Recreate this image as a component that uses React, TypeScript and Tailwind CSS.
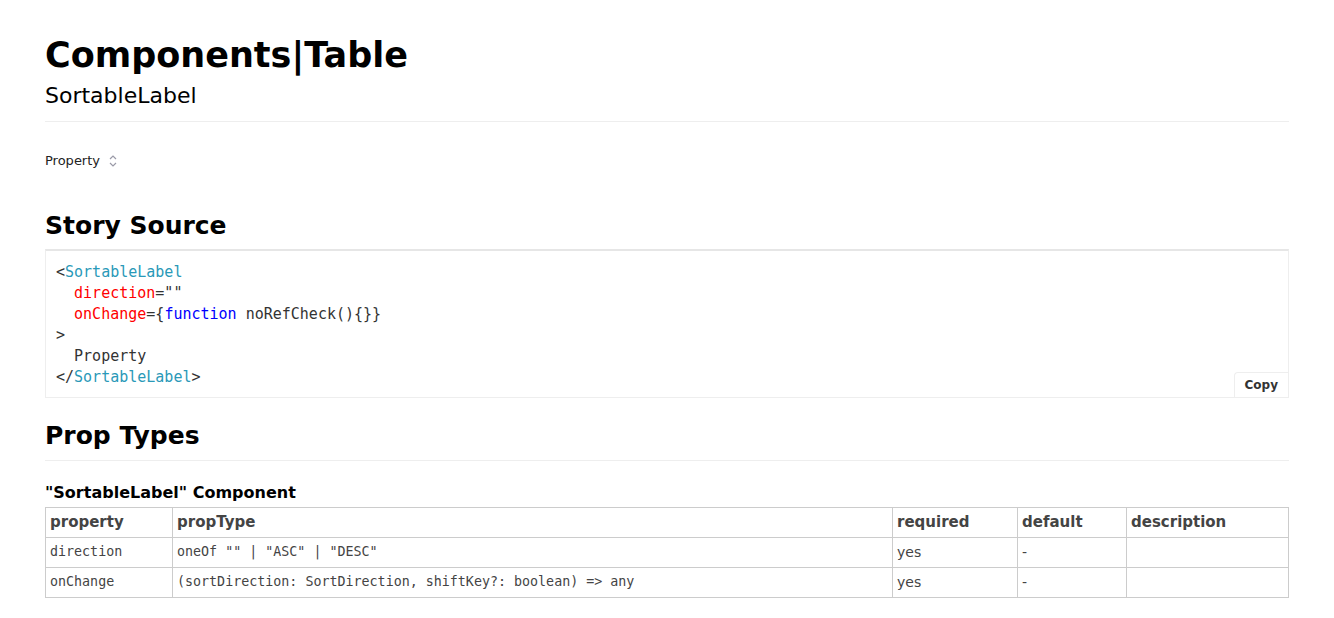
import React from "react";

const sans = "font-['DejaVu_Sans',sans-serif]";
const mono = "font-['DejaVu_Sans_Mono',monospace]";

const rows = [
  { name: "direction", type: 'oneOf "" | "ASC" | "DESC"', required: "yes", def: "-" },
  {
    name: "onChange",
    type: "(sortDirection: SortDirection, shiftKey?: boolean) => any",
    required: "yes",
    def: "-",
  },
];

function Chevrons() {
  return (
    <svg width="10" height="14" viewBox="0 0 10 14" fill="none" stroke="#9a9aa8" strokeWidth="1.2">
      <path d="M2 5 L5 2 L8 5" />
      <path d="M2 9 L5 12 L8 9" />
    </svg>
  );
}

export default function App() {
  return (
    <div className={`${sans} bg-white text-black min-h-screen px-[45px] pt-[33px]`}>
      <h1 className="text-[35px] font-bold leading-[44px]">Components|Table</h1>
      <h2 className="text-[22px] leading-[28px] mt-[5px]">SortableLabel</h2>
      <hr className="border-0 border-t border-[#eee] mt-[11px]" />

      <div className="mt-[29px] flex items-center gap-[8px] text-[13px] text-[#222]">
        <span>Property</span>
        <Chevrons />
      </div>

      <h2 className="text-[25px] font-bold leading-[30px] mt-[40px]">Story Source</h2>
      <div className="relative mt-[8px] border border-[#eee] border-t-2 border-t-[#e6e6e6] px-[10px] pt-[11px] pb-[9px]">
        <div className={`${mono} text-[15px] leading-[21px] text-[#333] whitespace-pre`}>
          <div>
            {"<"}
            <span className="text-[#2a99b8]">SortableLabel</span>
          </div>
          <div>
            {"  "}
            <span className="text-[#ff0000]">direction</span>
            {'=""'}
          </div>
          <div>
            {"  "}
            <span className="text-[#ff0000]">onChange</span>
            {"={"}
            <span className="text-[#0000ff]">function</span>
            {" noRefCheck(){}}"}
          </div>
          <div>{">"}</div>
          <div>{"  Property"}</div>
          <div>
            {"</"}
            <span className="text-[#2a99b8]">SortableLabel</span>
            {">"}
          </div>
        </div>
        <button className="absolute right-0 bottom-0 h-[25px] px-[10px] border-l border-t border-[#eee] rounded-tl-[4px] bg-white text-[12px] font-bold text-[#333]">
          Copy
        </button>
      </div>

      <h2 className="text-[25px] font-bold leading-[30px] mt-[23px]">Prop Types</h2>
      <hr className="border-0 border-t border-[#eee] mt-[9px]" />

      <h3 className="text-[16px] font-bold leading-[20px] mt-[22px]">"SortableLabel" Component</h3>
      <table className="w-full mt-[4px] border-collapse text-[#444]">
        <thead>
          <tr className="h-[30px]">
            <th className="w-[127px] border border-[#ccc] px-[4px] text-left text-[15px] font-bold">property</th>
            <th className="w-[720px] border border-[#ccc] px-[4px] text-left text-[15px] font-bold">propType</th>
            <th className="w-[125px] border border-[#ccc] px-[4px] text-left text-[15px] font-bold">required</th>
            <th className="w-[109px] border border-[#ccc] px-[4px] text-left text-[15px] font-bold">default</th>
            <th className="border border-[#ccc] px-[4px] text-left text-[15px] font-bold">description</th>
          </tr>
        </thead>
        <tbody>
          {rows.map((r) => (
            <tr key={r.name} className="h-[30px]">
              <td className={`${mono} border border-[#ccc] px-[4px] text-[13.33px]`}>{r.name}</td>
              <td className={`${mono} border border-[#ccc] px-[4px] text-[13.33px]`}>{r.type}</td>
              <td className="border border-[#ccc] px-[4px] text-[14px]">{r.required}</td>
              <td className="border border-[#ccc] px-[4px] text-[14px]">{r.def}</td>
              <td className="border border-[#ccc] px-[4px] text-[14px]"></td>
            </tr>
          ))}
        </tbody>
      </table>
    </div>
  );
}
